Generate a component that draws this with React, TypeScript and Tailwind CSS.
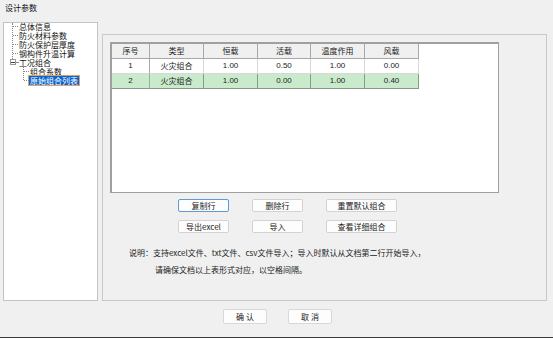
import React from 'react';

const FONT = { fontFamily: '"Noto Sans CJK SC", "Liberation Sans", sans-serif' };

const TREE_ROOT = ['总体信息', '防火材料参数', '防火保护层厚度', '钢构件升温计算'];

const COLUMNS = [
  { label: '序号', w: 'w-[38px]' },
  { label: '类型', w: 'w-[54px]' },
  { label: '恒载', w: 'w-[54px]' },
  { label: '活载', w: 'w-[53px]' },
  { label: '温度作用', w: 'w-[54px]' },
  { label: '风载', w: 'w-[54px]' },
];

const ROWS = [
  { cells: ['1', '火灾组合', '1.00', '0.50', '1.00', '0.00'], bg: 'bg-white' },
  { cells: ['2', '火灾组合', '1.00', '0.00', '1.00', '0.40'], bg: 'bg-[#c9ebcc]' },
];

function Btn({ label, w, focus }: { label: string; w: string; focus?: boolean }) {
  return (
    <div
      className={`${w} flex h-[13px] items-center justify-center rounded-[2px] border bg-[#fdfdfd] text-[8px] leading-none text-[#222] ${
        focus ? 'border-[#5a9bd8]' : 'border-[#d3d3d3]'
      }`}
    >
      {label}
    </div>
  );
}

function TreeRow({ label, indent, selected }: { label: string; indent: number; selected?: boolean }) {
  return (
    <div className="flex h-[9px] items-center">
      <div style={{ width: indent }} />
      <span
        className={`px-[1px] text-[8px] leading-[9px] ${
          selected ? 'bg-[#0a64d0] text-white outline outline-1 outline-[#e0a060]' : 'text-[#111]'
        }`}
      >
        {label}
      </span>
    </div>
  );
}

export default function App() {
  return (
    <div className="relative h-[338px] w-[553px] overflow-hidden bg-[#f0f0f0]" style={FONT}>
      <div className="flex h-[16px] items-center pl-[5px] text-[8px] leading-none text-[#111]">设计参数</div>

      <div className="mt-[6px] flex">
        {/* tree panel */}
        <div className="relative ml-[3px] h-[279px] w-[95px] border border-[#c4c4c4] bg-white">
          <div className="-mt-[1px]">
            {TREE_ROOT.map((t) => (
              <TreeRow key={t} label={t} indent={14} />
            ))}
            <TreeRow label="工况组合" indent={14} />
            <TreeRow label="组合系数" indent={25} />
            <TreeRow label="原始组合列表" indent={25} selected />
          </div>
          {/* dotted connectors */}
          <div className="absolute left-[8px] top-[0px] h-[36px] border-l border-dotted border-[#888]" />
          {[3, 12, 21, 30].map((y) => (
            <div key={y} className="absolute left-[9px] w-[5px] border-t border-dotted border-[#888]" style={{ top: y }} />
          ))}
          <div className="absolute left-[6px] top-[36px] flex h-[6px] w-[6px] items-center justify-center border border-[#999] bg-white">
            <div className="h-px w-[4px] bg-[#444]" />
          </div>
          <div className="absolute left-[12px] top-[39px] w-[2px] border-t border-dotted border-[#888]" />
          <div className="absolute left-[19px] top-[43px] h-[14px] border-l border-dotted border-[#888]" />
          {[48, 57].map((y) => (
            <div key={y} className="absolute left-[20px] w-[5px] border-t border-dotted border-[#888]" style={{ top: y }} />
          ))}
        </div>

        {/* right panel */}
        <div className="ml-[4px] mt-[12px] h-[267px] w-[445px] border border-[#c8c8c8] pl-[7px] pt-[7px]">
          <div className="h-[151px] w-[389px] border-b border-l-2 border-r border-t-2 border-[#a0a0a0] bg-white">
            <div className="w-[307px]">
              <div className="flex h-[15px] bg-[#f0f0f0]">
                {COLUMNS.map((c) => (
                  <div
                    key={c.label}
                    className={`${c.w} flex items-center justify-center border-b border-r border-[#a8a8a8] text-[8px] leading-none text-[#222]`}
                  >
                    {c.label}
                  </div>
                ))}
              </div>
              {ROWS.map((r, i) => (
                <div key={i} className={`flex h-[15px] ${r.bg}`}>
                  {r.cells.map((v, j) => (
                    <div
                      key={j}
                      className={`${COLUMNS[j].w} flex items-center justify-center border-b border-r ${
                        i === 1 ? 'border-[#8a9a8a]' : 'border-[#d8d8d8]'
                      } ${j === 0 ? 'border-r-[#a8a8a8]' : ''} text-[8px] leading-none text-[#222]`}
                      style={{ fontFamily: j === 1 ? FONT.fontFamily : '"Liberation Sans", sans-serif' }}
                    >
                      {v}
                    </div>
                  ))}
                </div>
              ))}
            </div>
          </div>

          <div className="mt-[6px] flex gap-[23px] pl-[68px]">
            <Btn label="复制行" w="w-[51px]" focus />
            <Btn label="删除行" w="w-[51px]" />
            <Btn label="重置默认组合" w="w-[71px]" />
          </div>
          <div className="mt-[8px] flex gap-[23px] pl-[68px]">
            <Btn label="导出excel" w="w-[51px]" />
            <Btn label="导入" w="w-[51px]" />
            <Btn label="查看详细组合" w="w-[71px]" />
          </div>

          <div className="mt-[11px] pl-[19px] text-[8px] leading-[17px] text-[#222]">
            <div>说明：支持excel文件、txt文件、csv文件导入；导入时默认从文档第二行开始导入，</div>
            <div className="pl-[26px]">请确保文档以上表形式对应，以空格间隔。</div>
          </div>
        </div>
      </div>

      <div className="mt-[8px] flex gap-[21px] pl-[223px]">
        <div className="flex h-[15px] w-[44px] items-center justify-center rounded-[2px] border border-[#d8d8d8] bg-[#fdfdfd] text-[8px] leading-none text-[#222]">
          确 认
        </div>
        <div className="flex h-[15px] w-[44px] items-center justify-center rounded-[2px] border border-[#d8d8d8] bg-[#fdfdfd] text-[8px] leading-none text-[#222]">
          取 消
        </div>
      </div>

      <div className="absolute bottom-0 left-0 h-px w-full bg-[#3a3a3a]" />
    </div>
  );
}
